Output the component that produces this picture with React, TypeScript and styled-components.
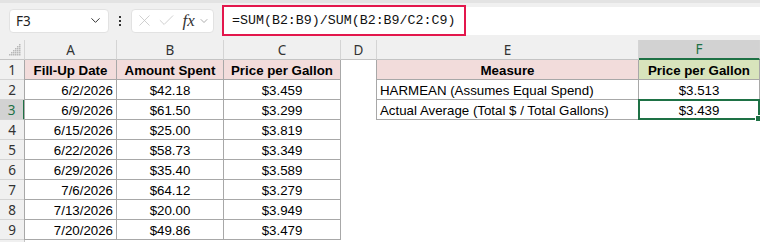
import styled, { createGlobalStyle, css } from "styled-components"
import { ChevronDown, X, Check } from "lucide-react"

const GlobalStyle = createGlobalStyle`
  body {
    margin: 0;
    background: #ffffff;
    font-family: 'Liberation Sans', Arial, sans-serif;
  }
`

const GREEN = "#1e7145"
const COLS = [25, 92, 107, 117, 36, 262, 121]
const LETTERS = ["A", "B", "C", "D", "E", "F"]

type Align = "left" | "center" | "right"

interface CellDef {
  text?: string
  align?: Align
  bold?: boolean
  fill?: string
  boxed?: boolean
  leftEdge?: boolean
  selected?: boolean
}

const data: [string, string, string][] = [
  ["6/2/2026", "$42.18", "$3.459"],
  ["6/9/2026", "$61.50", "$3.299"],
  ["6/15/2026", "$25.00", "$3.819"],
  ["6/22/2026", "$58.73", "$3.349"],
  ["6/29/2026", "$35.40", "$3.589"],
  ["7/6/2026", "$64.12", "$3.279"],
  ["7/13/2026", "$20.00", "$3.949"],
  ["7/20/2026", "$49.86", "$3.479"],
]

const measures: [string, string][] = [
  ["HARMEAN (Assumes Equal Spend)", "$3.513"],
  ["Actual Average (Total $ / Total Gallons)", "$3.439"],
]

function buildRow(r: number): CellDef[] {
  if (r === 1) {
    return [
      { text: "Fill-Up Date", align: "center", bold: true, fill: "#f2dcdb", boxed: true, leftEdge: true },
      { text: "Amount Spent", align: "center", bold: true, fill: "#f2dcdb", boxed: true },
      { text: "Price per Gallon", align: "center", bold: true, fill: "#f2dcdb", boxed: true },
      {},
      { text: "Measure", align: "center", bold: true, fill: "#f2dcdb", boxed: true, leftEdge: true },
      { text: "Price per Gallon", align: "center", bold: true, fill: "#d8e4bc", boxed: true },
    ]
  }
  const [date, amount, price] = data[r - 2]
  const row: CellDef[] = [
    { text: date, align: "right", boxed: true, leftEdge: true },
    { text: amount, align: "center", boxed: true },
    { text: price, align: "center", boxed: true },
    {},
  ]
  const m = measures[r - 2]
  if (m) {
    row.push({ text: m[0], align: "left", boxed: true, leftEdge: true })
    row.push({ text: m[1], align: "center", boxed: true, selected: r === 3 })
  } else {
    row.push({}, {})
  }
  return row
}

export default function App() {
  const rows = [1, 2, 3, 4, 5, 6, 7, 8, 9]
  return (
    <>
      <GlobalStyle />
      <Window>
        <TopStrip />
        <FormulaBar>
          <NameBox>
            <span>F3</span>
            <ChevronDown size={15} strokeWidth={1.6} color="#333" />
          </NameBox>
          <Grip>
            <i />
            <i />
            <i />
          </Grip>
          <FnBox>
            <X size={19} strokeWidth={1} color="#c4c4c4" />
            <Check size={19} strokeWidth={1} color="#c4c4c4" />
            <Fx>fx</Fx>
            <ChevronDown size={12} strokeWidth={1.4} color="#8a8a8a" />
          </FnBox>
          <FormulaInput>
            <Highlight>=SUM(B2:B9)/SUM(B2:B9/C2:C9)</Highlight>
          </FormulaInput>
        </FormulaBar>
        <Sheet>
          <Corner>
            <svg width="12" height="12" viewBox="0 0 12 12">
              {[0, 1, 2, 3, 4, 5].map((i) =>
                [0, 1, 2, 3, 4, 5].filter((j) => j >= 5 - i).map((j) => (
                  <rect key={`${i}-${j}`} x={j * 2} y={i * 2} width="1.5" height="1.5" fill="#b8b8b8" />
                ))
              )}
            </svg>
          </Corner>
          {LETTERS.map((l) => (
            <ColHead key={l} $active={l === "F"}>{l}</ColHead>
          ))}
          {rows.map((r) => (
            <RowGroup key={r}>
              <RowHead $active={r === 3}>{r}</RowHead>
              {buildRow(r).map((c, i) => (
                <Cell
                  key={i}
                  $align={c.align || "left"}
                  $bold={!!c.bold}
                  $fill={c.fill}
                  $boxed={!!c.boxed}
                  $leftEdge={!!c.leftEdge}
                  $selected={!!c.selected}
                >
                  {c.text}
                </Cell>
              ))}
            </RowGroup>
          ))}
          <RowHead $active={false} />
        </Sheet>
      </Window>
    </>
  )
}

const Window = styled.div`
  width: 760px;
  height: 242px;
  overflow: hidden;
  background: #ffffff;
`

const TopStrip = styled.div`
  height: 3px;
  background: #e3e3e3;
`

const FormulaBar = styled.div`
  height: 37px;
  display: flex;
  align-items: center;
  padding: 0 0 2px 9px;
  box-sizing: border-box;
  background: #f0f0f0;
`

const NameBox = styled.div`
  width: 100px;
  height: 24px;
  box-sizing: border-box;
  background: #fff;
  border: 1px solid #e2e2e2;
  border-radius: 4px;
  display: flex;
  align-items: center;
  justify-content: space-between;
  padding: 0 5px 0 6px;
  font-family: 'Noto Sans', 'Liberation Sans', sans-serif;
  font-size: 13.5px;
  color: #222;
`

const Grip = styled.div`
  width: 22px;
  display: flex;
  flex-direction: column;
  align-items: center;
  gap: 2px;

  i {
    display: block;
    width: 2px;
    height: 2px;
    background: #333;
  }
`

const FnBox = styled.div`
  width: 83px;
  height: 24px;
  box-sizing: border-box;
  background: #fff;
  border: 1px solid #e2e2e2;
  border-radius: 4px;
  display: flex;
  align-items: center;
  justify-content: space-between;
  padding: 0 3px 0 3px;
`

const Fx = styled.span`
  font-family: 'Liberation Serif', serif;
  font-style: italic;
  font-size: 17px;
  color: #333;
  margin-left: 3px;
  line-height: 1;
`

const FormulaInput = styled.div`
  flex: 1;
  height: 28px;
  margin-left: 8px;
  background: #fff;
  display: flex;
  align-items: center;
`

const Highlight = styled.div`
  height: 31px;
  width: 244px;
  box-sizing: border-box;
  border: 2.5px solid #e3174c;
  display: flex;
  align-items: center;
  padding-left: 8px;
  font-family: 'Liberation Mono', monospace;
  font-size: 13.3px;
  color: #111;
`

const Sheet = styled.div`
  display: grid;
  grid-template-columns: ${COLS.map((c) => `${c}px`).join(" ")};
  grid-auto-rows: 20px;
  font-family: 'Liberation Sans', Arial, sans-serif;
  font-size: 13.3px;
`

const RowGroup = styled.div`
  display: contents;
`

const headBase = css`
  background: #f0f0f0;
  box-sizing: border-box;
  display: flex;
  align-items: center;
  justify-content: center;
  font-family: 'Noto Sans', 'Liberation Sans', sans-serif;
  font-size: 13.5px;
  color: #333;
`

const Corner = styled.div`
  ${headBase};
  border-right: 1px solid #d4d4d4;
  border-bottom: 1px solid #c4c4c4;
  align-items: flex-end;
  justify-content: flex-end;
  padding: 0 3px 3px 0;
`

const ColHead = styled.div<{ $active: boolean }>`
  ${headBase};
  border-right: 1px solid #d4d4d4;
  border-bottom: ${(p) => (p.$active ? `2px solid ${GREEN}` : "1px solid #c4c4c4")};
  background: ${(p) => (p.$active ? "#d2d2d2" : "#f0f0f0")};
  color: ${(p) => (p.$active ? GREEN : "#333")};
`

const RowHead = styled.div<{ $active: boolean }>`
  ${headBase};
  border-bottom: 1px solid #d4d4d4;
  border-right: ${(p) => (p.$active ? `2px solid ${GREEN}` : "1px solid #c4c4c4")};
  background: ${(p) => (p.$active ? "#d2d2d2" : "#f0f0f0")};
  color: ${(p) => (p.$active ? GREEN : "#333")};
`

const Cell = styled.div<{
  $align: Align
  $bold: boolean
  $fill?: string
  $boxed: boolean
  $leftEdge: boolean
  $selected: boolean
}>`
  position: relative;
  box-sizing: border-box;
  display: flex;
  align-items: center;
  justify-content: ${(p) =>
    p.$align === "right" ? "flex-end" : p.$align === "center" ? "center" : "flex-start"};
  padding: 1px 3px 0;
  white-space: nowrap;
  color: #000;
  font-weight: ${(p) => (p.$bold ? 700 : 400)};
  background: ${(p) => p.$fill || "#fff"};
  border-right: ${(p) => (p.$boxed ? "1px solid #a8a8a8" : "none")};
  border-bottom: ${(p) => (p.$boxed ? "1px solid #a8a8a8" : "none")};
  margin-left: ${(p) => (p.$leftEdge ? "-1px" : "0")};
  border-left: ${(p) => (p.$leftEdge ? "1px solid #a8a8a8" : "none")};

  ${(p) =>
    p.$selected &&
    css`
      &::after {
        content: "";
        position: absolute;
        left: -1px;
        top: -1px;
        right: -1px;
        bottom: -1px;
        border: 2px solid ${GREEN};
      }
      &::before {
        content: "";
        position: absolute;
        right: -3px;
        bottom: -3px;
        width: 5px;
        height: 5px;
        background: ${GREEN};
        border: 1px solid #fff;
        z-index: 1;
      }
    `}
`
